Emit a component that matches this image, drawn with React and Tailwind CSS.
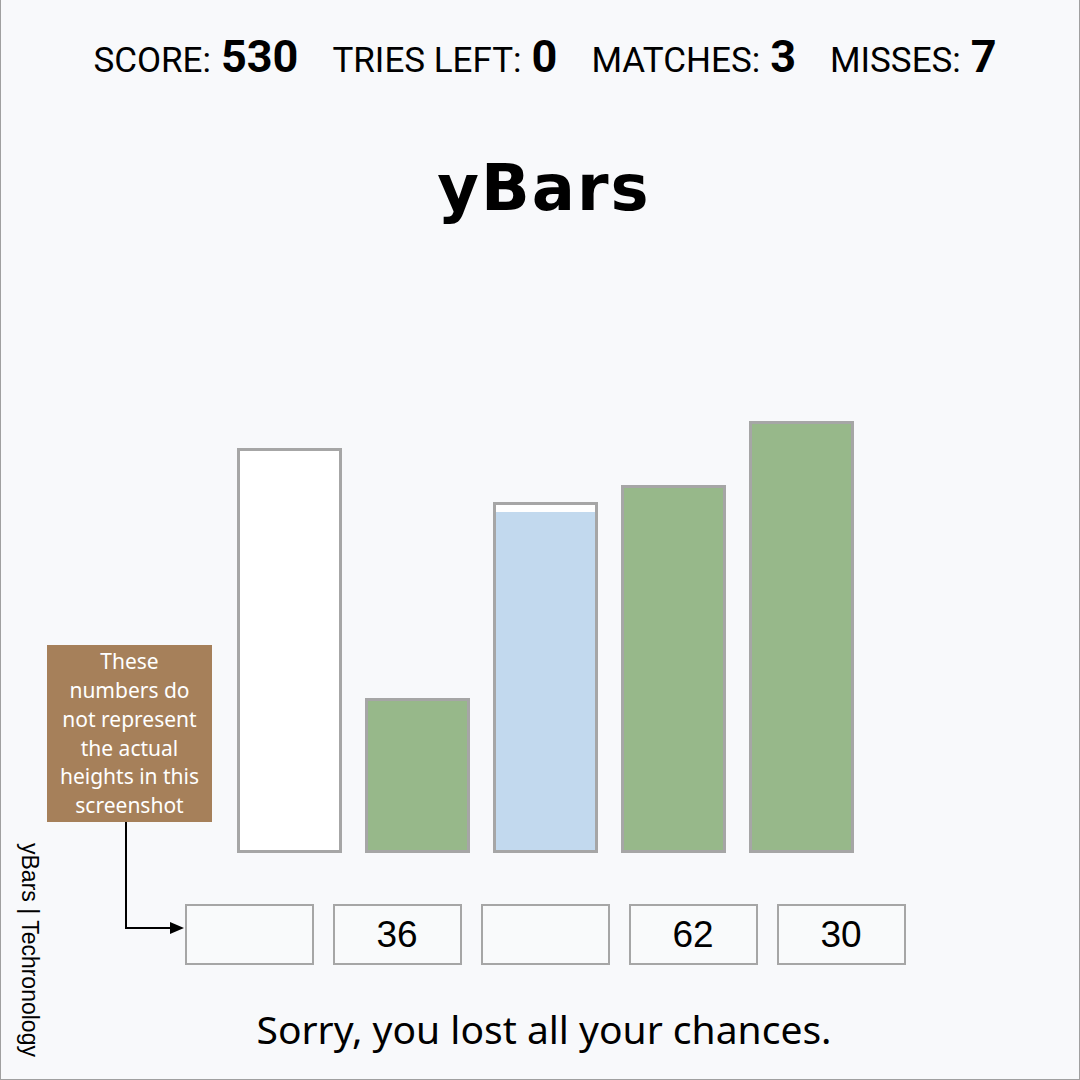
import React from 'react';

const bars = [
    { height: 405, fill: 'empty' },
    { height: 155, fill: 'green' },
    { height: 351, fill: 'blue', level: 338 },
    { height: 368, fill: 'green' },
    { height: 432, fill: 'green' },
];

const guesses = ['', '36', '', '62', '30'];

const Stat = ({ label, value }) => (
    <div className="flex items-baseline gap-[10px]">
        <span className="text-[35px] text-black">{label}</span>
        <span className="text-[45px] font-bold text-black">{value}</span>
    </div>
);

const Bar = ({ height, fill, level }) => {
    if (fill === 'blue') {
        return (
            <div className="w-[105px] border-[3px] border-[#a6a6a6] bg-white flex flex-col justify-end" style={{ height }}>
                <div className="w-full bg-[#c2d9ee]" style={{ height: level }} />
            </div>
        );
    }
    return (
        <div
            className={`w-[105px] border-[3px] border-[#a6a6a6] ${fill === 'green' ? 'bg-[#97b88a]' : 'bg-white'}`}
            style={{ height }}
        />
    );
};

export default function App() {
    return (
        <div className="relative w-[1080px] h-[1080px] bg-[#f8f9fb] border-x border-b border-[#a0a0a0] font-['Roboto',sans-serif] overflow-hidden">
            {/* score strip */}
            <div className="flex justify-center gap-[34px] pt-[23px] pl-[10px] h-[96px]">
                <Stat label="SCORE:" value="530" />
                <Stat label="TRIES LEFT:" value="0" />
                <Stat label="MATCHES:" value="3" />
                <Stat label="MISSES:" value="7" />
            </div>

            <h1 className="text-center pl-[8px] font-['DejaVu_Sans',sans-serif] font-bold text-[64px] tracking-[2px] leading-none text-black mt-[60px]">
                yBars
            </h1>

            {/* bars */}
            <div className="flex items-end justify-center gap-[23px] pl-[10px] h-[432px] mt-[201px]">
                {bars.map((b, i) => (
                    <Bar key={i} {...b} />
                ))}
            </div>

            {/* guess inputs */}
            <div className="flex justify-center gap-[19px] pl-[10px] mt-[51px]">
                {guesses.map((g, i) => (
                    <div
                        key={i}
                        className="w-[129px] h-[61px] border-2 border-[#a6a6a6] bg-[#f9fafb] flex items-center justify-center text-[37px] font-['Liberation_Sans',sans-serif] text-black"
                    >
                        {g}
                    </div>
                ))}
            </div>

            <p className="text-center pl-[8px] mt-[38px] text-[39px] leading-[52px] font-['Noto_Sans',sans-serif] text-black">
                Sorry, you lost all your chances.
            </p>

            {/* note about the numbers */}
            <div className="absolute left-[46px] top-[645px] w-[165px] h-[177px] bg-[#a6805a] flex items-center justify-center">
                <p className="text-center text-white text-[21px] leading-[28.8px] font-['Noto_Sans',sans-serif]">
                    These<br />numbers do<br />not represent<br />the actual<br />heights in this<br />screenshot
                </p>
            </div>
            <svg className="absolute left-[115px] top-[822px]" width="72" height="115" viewBox="0 0 72 115">
                <path d="M10 0 V106 H58" fill="none" stroke="#000" strokeWidth="2" />
                <path d="M54 100 L68 106 L54 112 Z" fill="#000" />
            </svg>

            <div className="absolute left-[17px] top-[843px] [writing-mode:vertical-rl] text-[23px] leading-none text-black font-['Liberation_Sans',sans-serif]">
                yBars | Techronology
            </div>
        </div>
    );
}
